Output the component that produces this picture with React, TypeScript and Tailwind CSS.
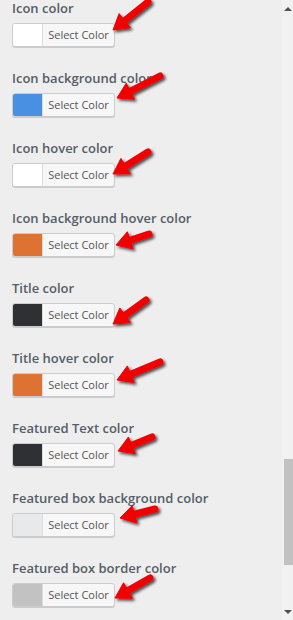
import React from "react";

const rows = [
  { label: "Icon color", swatch: "bg-white" },
  { label: "Icon background color", swatch: "bg-[#4a90e2]" },
  { label: "Icon hover color", swatch: "bg-white" },
  { label: "Icon background hover color", swatch: "bg-[#dd7233]" },
  { label: "Title color", swatch: "bg-[#2f3033]" },
  { label: "Title hover color", swatch: "bg-[#dd7233]" },
  { label: "Featured Text color", swatch: "bg-[#2f3033]" },
  { label: "Featured box background color", swatch: "bg-[#e8e9ea]" },
  { label: "Featured box border color", swatch: "bg-[#c2c2c2]" },
];

// [tailX, tailY, tipX, tipY]
const arrows: [number, number, number, number][] = [
  [148, 2, 113, 30],
  [160, 76, 117, 98],
  [148, 152, 113, 174],
  [149, 234, 116, 245],
  [146, 300, 113, 324],
  [160, 362, 117, 380],
  [152, 437, 118, 451],
  [155, 509, 120, 518],
  [150, 578, 115, 598],
];

function arrowPoints(x1: number, y1: number, x2: number, y2: number) {
  const dx = x2 - x1;
  const dy = y2 - y1;
  const len = Math.hypot(dx, dy);
  const ux = dx / len;
  const uy = dy / len;
  const nx = -uy;
  const ny = ux;
  const head = 15;
  const hw = 9;
  const bx = x2 - ux * head;
  const by = y2 - uy * head;
  return {
    shaft: { x1, y1, x2: bx + ux * 2, y2: by + uy * 2 },
    head: `${x2},${y2} ${bx + nx * hw},${by + ny * hw} ${bx - nx * hw},${by - ny * hw}`,
  };
}

function Arrows() {
  return (
    <svg className="pointer-events-none absolute left-0 top-0" width="283" height="620">
      <defs>
        <filter id="sh" x="-30%" y="-30%" width="160%" height="160%">
          <feGaussianBlur in="SourceAlpha" stdDeviation="1.6" />
          <feOffset dx="2" dy="2" result="b" />
          <feComponentTransfer>
            <feFuncA type="linear" slope="0.7" />
          </feComponentTransfer>
          <feMerge>
            <feMergeNode />
            <feMergeNode in="SourceGraphic" />
          </feMerge>
        </filter>
      </defs>
      {arrows.map(([a, b, c, d], i) => {
        const p = arrowPoints(a, b, c, d);
        return (
          <g key={i} filter="url(#sh)" fill="#f20000" stroke="#f20000">
            <line {...p.shaft} strokeWidth="7" strokeLinecap="round" />
            <polygon points={p.head} strokeWidth="1" strokeLinejoin="round" />
          </g>
        );
      })}
    </svg>
  );
}

export default function App() {
  return (
    <div className="flex h-[620px] w-[293px] overflow-hidden bg-[#eeeeee] font-['Open_Sans','Liberation_Sans',sans-serif]">
      <div className="relative flex-1">
        <div className="flex flex-col pl-3 pt-[-2px]">
          {rows.map((r) => (
            <div key={r.label} className="flex h-[70px] flex-col">
              <div className="mt-[-2px] h-[22px] whitespace-nowrap text-[13px] font-semibold leading-[20px] text-[#555d66]">
                {r.label}
              </div>
              <div className="mt-[3px] flex h-[24px] w-[103px] overflow-hidden rounded-[3px] border border-[#cccccc] bg-[#f7f7f7] shadow-[0_1px_0_#cccccc]">
                <div className={`w-[30px] border-r border-[#dddddd] ${r.swatch}`} />
                <div className="flex flex-1 items-center justify-center text-[11px] text-[#555555]">
                  Select Color
                </div>
              </div>
            </div>
          ))}
        </div>
        <Arrows />
      </div>
      <div className="relative flex w-[11px] flex-col bg-[#f1f1f1]">
        <div className="flex h-[17px] items-center justify-center">
          <div className="h-0 w-0 border-x-[4px] border-b-[4px] border-x-transparent border-b-[#505050]" />
        </div>
        <div className="h-[442px]" />
        <div className="ml-[2px] h-[106px] bg-[#c1c1c1]" />
        <div className="flex-1" />
        <div className="flex h-[17px] items-center justify-center">
          <div className="h-0 w-0 border-x-[4px] border-t-[4px] border-x-transparent border-t-[#505050]" />
        </div>
      </div>
    </div>
  );
}
